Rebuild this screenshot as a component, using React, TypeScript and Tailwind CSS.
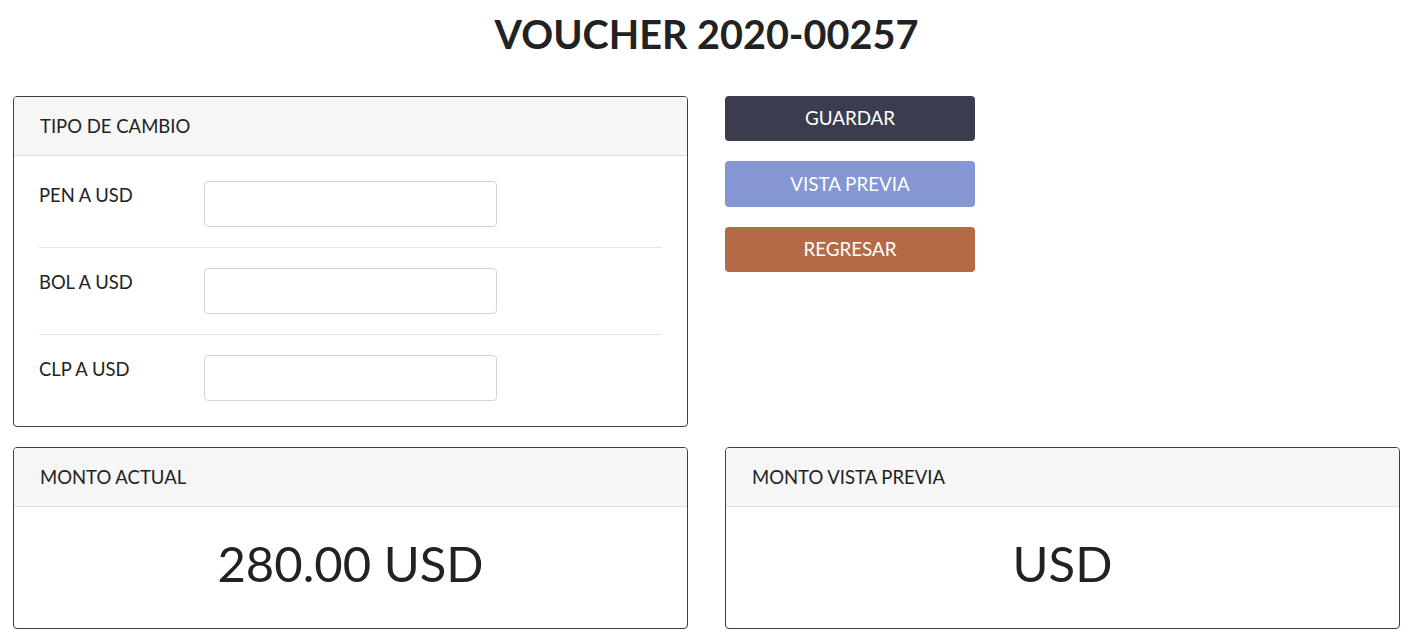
export default function App() {
  const rates = ['PEN A USD', 'BOL A USD', 'CLP A USD'];

  return (
    <div className="min-h-screen bg-white text-[#222222] font-['Lato','Liberation_Sans',sans-serif]">
      <div className="w-[1387px] ml-[13px] pt-[10px]">
        <h1 className="text-center text-[39.6px] leading-[48px] font-bold">VOUCHER 2020-00257</h1>

        <div className="mt-[38px] grid grid-cols-[675px_675px] gap-x-[37px] gap-y-[20px]">
          {/* Tipo de cambio */}
          <div className="border border-[#3b3d4f] rounded-[4px] overflow-hidden">
            <div className="h-[59px] bg-[#f6f6f6] border-b border-[#dddddd] flex items-center px-[26px] pt-[2px] text-[18.5px]">
              TIPO DE CAMBIO
            </div>
            <div className="px-[25px] py-[25px]">
              {rates.map((r, i) => (
                <div
                  key={r}
                  className={`flex items-start ${i < rates.length - 1 ? 'pb-[20px] mb-[20px] border-b border-[#e6e6e6]' : ''}`}
                >
                  <div className="w-[165px] pt-[1px] text-[18.4px] leading-[27px]">{r}</div>
                  <input
                    type="text"
                    className="w-[293px] h-[46px] rounded-[4px] border border-[#d4d4d8] bg-white px-3 outline-none"
                  />
                </div>
              ))}
            </div>
          </div>

          {/* Botones */}
          <div className="flex flex-col gap-[20px]">
            <button className="w-[250px] h-[45px] rounded-[4px] bg-[#3b3d4f] text-white text-[18.8px]">GUARDAR</button>
            <button className="w-[250px] h-[46px] rounded-[4px] bg-[#8496d4] text-white text-[18.8px]">VISTA PREVIA</button>
            <button className="w-[250px] h-[45px] rounded-[4px] bg-[#b46a46] text-white text-[18.8px]">REGRESAR</button>
          </div>

          {/* Monto actual */}
          <div className="border border-[#3b3d4f] rounded-[4px] overflow-hidden">
            <div className="h-[59px] bg-[#f6f6f6] border-b border-[#dddddd] flex items-center px-[26px] pt-[2px] text-[18.5px]">
              MONTO ACTUAL
            </div>
            <div className="h-[121px] flex items-center justify-center pb-[7px] text-[49px]">280.00 USD</div>
          </div>

          {/* Monto vista previa */}
          <div className="border border-[#3b3d4f] rounded-[4px] overflow-hidden">
            <div className="h-[59px] bg-[#f6f6f6] border-b border-[#dddddd] flex items-center px-[26px] pt-[2px] text-[18.5px]">
              MONTO VISTA PREVIA
            </div>
            <div className="h-[121px] flex items-center justify-center pb-[7px] text-[49px]">USD</div>
          </div>
        </div>
      </div>
    </div>
  );
}
